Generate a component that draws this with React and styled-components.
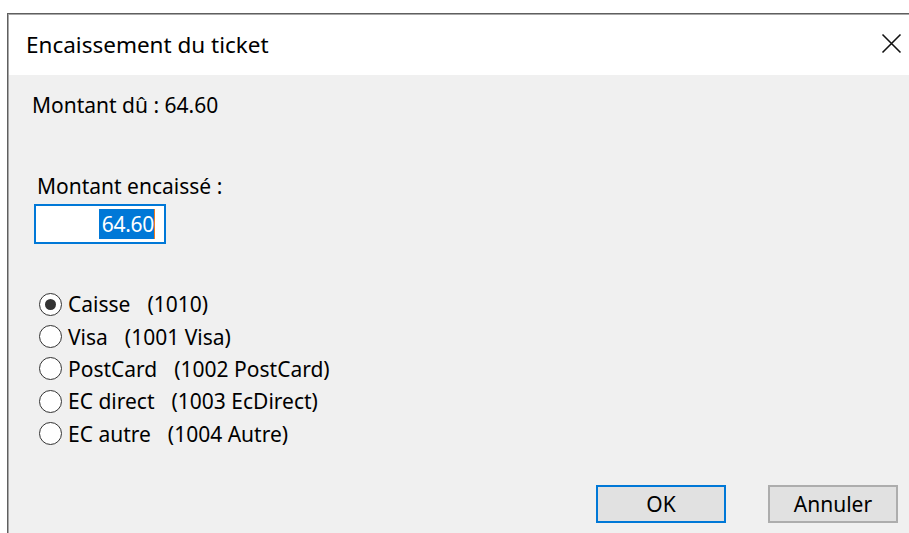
import styled, { createGlobalStyle } from 'styled-components';

const GlobalStyle = createGlobalStyle`
  html, body {
    margin: 0;
    padding: 0;
    background: #ffffff;
    overflow: hidden;
  }
  body {
    font-family: "Noto Sans", "Open Sans", sans-serif;
  }
`;

const modes = [
  { label: 'Caisse', account: '(1010)', checked: true },
  { label: 'Visa', account: '(1001 Visa)' },
  { label: 'PostCard', account: '(1002 PostCard)' },
  { label: 'EC direct', account: '(1003 EcDirect)' },
  { label: 'EC autre', account: '(1004 Autre)' },
];

const App = () => {
  return (
    <>
      <GlobalStyle />
      <StWindow>
        <StTitleBar>
          <StTitle>Encaissement du ticket</StTitle>
          <StCloseBtn aria-label="Fermer">
            <svg width="21" height="21" viewBox="0 0 21 21">
              <path d="M1.5 1.5 L19.5 19.5 M19.5 1.5 L1.5 19.5" stroke="#111" strokeWidth="1.6" fill="none" />
            </svg>
          </StCloseBtn>
        </StTitleBar>
        <StClient>
          <StAmountDue>Montant dû : 64.60</StAmountDue>
          <StField>
            <StLabel>Montant encaissé :</StLabel>
            <StTextBox>
              <StSelected>64.60</StSelected>
              <StCaret />
            </StTextBox>
          </StField>
          <StRadioList>
            {modes.map((m) => (
              <StRadioRow key={m.label}>
                <StRadio $checked={m.checked} />
                <span>{m.label}</span>
                <StAccount>{m.account}</StAccount>
              </StRadioRow>
            ))}
          </StRadioList>
          <StFooter>
            <StButton $default>OK</StButton>
            <StButton>Annuler</StButton>
          </StFooter>
        </StClient>
      </StWindow>
    </>
  );
};

export default App;

const StWindow = styled.div`
  margin: 13px 0 0 7px;
  height: calc(100vh - 13px);
  box-sizing: border-box;
  border-top: 1px solid #5f5f5f;
  border-left: 1px solid #5f5f5f;
  box-shadow: inset 1px 1px 0 #a8a8a8;
  padding: 1px 0 0 1px;
  display: flex;
  flex-direction: column;
  color: #000;
  font-size: 21px;
`;

const StTitleBar = styled.div`
  height: 60px;
  background: #ffffff;
  display: flex;
  align-items: center;
  justify-content: space-between;
  padding: 0 3px 0 17px;
  flex-shrink: 0;
`;

const StTitle = styled.span`
  font-size: 22.5px;
  margin-top: -2px;
`;

const StCloseBtn = styled.button`
  border: 0;
  background: transparent;
  width: 30px;
  height: 30px;
  padding: 0;
  margin-top: -3px;
  display: flex;
  align-items: center;
  justify-content: center;
`;

const StClient = styled.div`
  flex: 1;
  background: #f0f0f0;
  display: flex;
  flex-direction: column;
  padding: 15px 0 0 23px;
`;

const StAmountDue = styled.div`
  line-height: 30px;
`;

const StField = styled.div`
  margin-top: 52px;
  margin-left: 2px;
  display: flex;
  flex-direction: column;
`;

const StLabel = styled.div`
  margin-left: 3px;
  line-height: 28px;
`;

const StTextBox = styled.div`
  margin-top: 4px;
  width: 132px;
  height: 40px;
  box-sizing: border-box;
  border: 2px solid #0078d7;
  background: #ffffff;
  display: flex;
  align-items: center;
  justify-content: flex-end;
  padding-right: 9px;
`;

const StSelected = styled.span`
  background: #0078d7;
  color: #ffffff;
  line-height: 30px;
  letter-spacing: -0.3px;
  padding-left: 3px;
`;

const StCaret = styled.span`
  width: 1px;
  height: 30px;
  background: #f07a1e;
`;

const StRadioList = styled.div`
  margin-top: 44px;
  margin-left: 5px;
  display: flex;
  flex-direction: column;
`;

const StRadioRow = styled.div`
  display: flex;
  align-items: center;
  height: 32.4px;
`;

const StRadio = styled.span`
  width: 23px;
  height: 23px;
  box-sizing: border-box;
  border-radius: 50%;
  border: 1.5px solid #333;
  background: #fff;
  margin-left: 2px;
  margin-right: 6px;
  position: relative;
  flex-shrink: 0;

  &::after {
    content: '';
    display: ${(p) => (p.$checked ? 'block' : 'none')};
    position: absolute;
    inset: 5px;
    border-radius: 50%;
    background: #333;
  }
`;

const StAccount = styled.span`
  margin-left: 17px;
`;

const StFooter = styled.div`
  margin-top: auto;
  margin-bottom: 10px;
  display: flex;
  justify-content: flex-end;
  gap: 42px;
  padding-right: 11px;
`;

const StButton = styled.button`
  width: 130px;
  height: 38px;
  box-sizing: border-box;
  font-family: inherit;
  font-size: 21px;
  color: #000;
  background: #e1e1e1;
  border: ${(p) => (p.$default ? '2px solid #0078d7' : '2px solid #adadad')};
  padding: 0;
`;
